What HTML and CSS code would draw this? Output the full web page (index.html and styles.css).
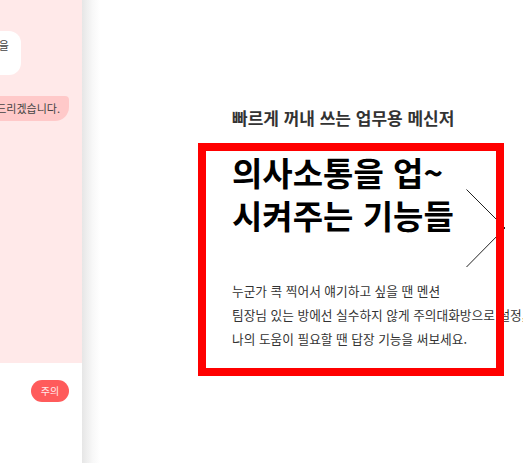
FILE: index.html
```html
<!DOCTYPE html>
<html lang="ko">
<head>
    <meta charset="UTF-8">
    <meta name="viewport" content="width=device-width, initial-scale=1.0">
    <title>업무용 메신저 기능</title>
    <link rel="stylesheet" href="styles.css">
</head>
<body>

    <div class="page">
        <!-- Phone preview, mostly cut off on the left -->
        <aside class="phone">
            <div class="chat">
                <div class="bubble bubble-in">회의 일정 변경 사항을<br>확인</div>
                <div class="bubble bubble-out">회의록은 정리해서 공유해 드리겠습니다.</div>
            </div>
            <div class="phone-foot">
                <span class="tag">주의</span>
            </div>
        </aside>
        <div class="shade"></div>

        <main class="stage">
            <svg class="next-arrow" width="40" height="80" viewBox="0 0 40 80">
                <polyline points="0.5,0.5 39,39 0.5,78" fill="none" stroke="#222" stroke-width="1"/>
            </svg>

            <p class="eyebrow">빠르게 꺼내 쓰는 업무용 메신저</p>

            <section class="feature">
                <h1>의사소통을 업~<br>시켜주는 기능들</h1>
                <p>누군가 콕 찍어서 얘기하고 싶을 땐 멘션<br>
                팀장님 있는 방에선 실수하지 않게 주의대화방으로 설정,<br>
                나의 도움이 필요할 땐 답장 기능을 써보세요.</p>
            </section>
        </main>
    </div>

</body>
</html>
```

FILE: styles.css
```css
body {
    margin: 0;
    font-family: "Noto Sans CJK KR", "Noto Sans", sans-serif;
    background-color: #fff;
}

.page {
    display: flex;
    height: 463px;
    overflow: hidden;
}

/* phone preview */
.phone {
    width: 82px;
    flex-shrink: 0;
    display: flex;
    flex-direction: column;
    overflow: hidden;
    font-size: 11px;
    color: #444;
}

.chat {
    height: 363px;
    background-color: #ffe9e9;
    padding-top: 31px;
    box-sizing: border-box;
    display: flex;
    flex-direction: column;
    align-items: flex-end;
}

.bubble {
    white-space: nowrap;
    line-height: 13px;
}

.bubble-in {
    background: #fff;
    padding: 8px 12px 10px;
    border-radius: 12px;
    margin-right: 61px;
}

.bubble-out {
    background: #ffc9c9;
    padding: 6px 9px;
    border-radius: 12px 4px 14px 12px;
    margin-top: 21px;
    margin-right: 13px;
}

.phone-foot {
    display: flex;
    justify-content: flex-end;
    padding: 17px 13px 0 0;
}

.tag {
    width: 38px;
    height: 22px;
    line-height: 22px;
    text-align: center;
    border-radius: 11px;
    background: #ff5b5b;
    color: #ffeaea;
    font-size: 10px;
}

.shade {
    width: 18px;
    flex-shrink: 0;
    background: linear-gradient(to right, #e6e6e6, #f8f8f8 60%, #fff);
}

/* right side */
.stage {
    flex: 1;
    position: relative;
    padding: 106px 0 0 106px;
}

.next-arrow {
    position: absolute;
    left: 366px;
    top: 189px;
}

.eyebrow {
    margin: 0;
    padding-left: 26px;
    font-size: 17px;
    font-weight: 700;
    line-height: 24px;
    color: #333;
    white-space: nowrap;
}

.feature {
    position: relative;
    width: 290px;
    box-sizing: border-box;
    margin-top: 21px;
    padding: 0 0 17px 26px;
    outline: 8px solid #ff0000;
}

.feature h1 {
    margin: 0;
    font-size: 33px;
    font-weight: 700;
    line-height: 43px;
    color: #000;
    white-space: nowrap;
}

.feature p {
    margin: 42px 0 0;
    font-size: 12.7px;
    line-height: 24px;
    color: #333;
    white-space: nowrap;
}
```
